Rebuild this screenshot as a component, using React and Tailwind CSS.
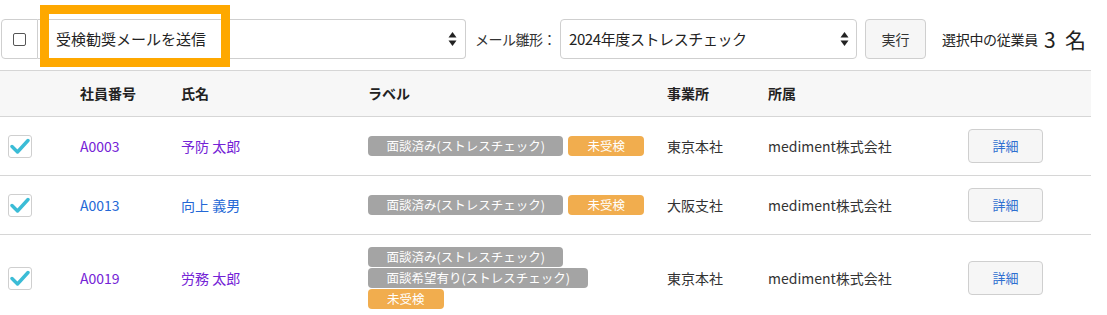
import React from "react";

const font = { fontFamily: '"Noto Sans CJK JP", "Noto Sans", sans-serif' };

function Arrows() {
  return (
    <svg width="9" height="16" viewBox="0 0 9 16" className="shrink-0">
      <path d="M4.5 1 L8.5 6.5 L0.5 6.5 Z" fill="#222" />
      <path d="M4.5 15 L8.5 9.5 L0.5 9.5 Z" fill="#222" />
    </svg>
  );
}

function Check() {
  return (
    <div className="w-[24px] h-[23px] border border-[#cfcfcf] rounded-[3px] bg-white flex items-center justify-center">
      <svg width="20" height="16" viewBox="0 0 20 16">
        <path d="M2 8.5 L7.5 14 L18 2.5" fill="none" stroke="#3bbcd6" strokeWidth="3.4" strokeLinecap="round" strokeLinejoin="round" />
      </svg>
    </div>
  );
}

function Gray({ children }) {
  return (
    <span className="inline-block h-[20px] leading-[20px] px-[18.5px] rounded-[4px] bg-[#a4a4a4] text-white text-[12.5px] whitespace-nowrap">
      {children}
    </span>
  );
}
function Orange() {
  return (
    <span className="inline-block h-[20px] leading-[20px] px-[19px] rounded-[4px] bg-[#f1ad4e] text-white text-[12.5px] whitespace-nowrap">
      未受検
    </span>
  );
}

const grid = "grid grid-cols-[80px_101px_187px_299px_101px_200px_123px] items-center";

function Row({ id, name, color, labels, tall, office }) {
  return (
    <div className={`${grid} border-b border-[#d6d6d6] ${tall ? "py-[12px]" : "h-[59px]"}`}>
      <div className="pl-[8px] flex items-center"><Check /></div>
      <div className={`text-[14px] ${color}`}>{id}</div>
      <div className={`text-[14px] ${color}`}>{name}</div>
      <div>{labels}</div>
      <div className="text-[14px] text-[#333]">{office}</div>
      <div className="text-[14px] text-[#333]">mediment株式会社</div>
      <div>
        <button className="w-[75px] h-[34px] border border-[#cfcfcf] rounded-[4px] bg-[#f6f6f6] text-[13px] text-[#2f6fd0]">
          詳細
        </button>
      </div>
    </div>
  );
}

export default function App() {
  const purple = "text-[#7423d6]";
  const blue = "text-[#2468d6]";
  return (
    <div className="w-[1107px] h-[315px] bg-white overflow-hidden relative" style={font}>
      <div className="flex items-center pt-[19px] pl-[1px]">
        <div className="w-[37px] h-[40px] border border-[#cfcfcf] rounded-l-[4px] flex items-center justify-center bg-white">
          <div className="w-[13px] h-[13px] border border-[#555] rounded-[2px] bg-white" />
        </div>
        <div className="w-[428px] h-[40px] border border-[#cfcfcf] border-l-0 rounded-r-[4px] flex items-center justify-between pl-[18px] pr-[8px] text-[15px] text-[#222] bg-white">
          <span>受検勧奨メールを送信</span>
          <Arrows />
        </div>
        <span className="ml-[9px] text-[14px] text-[#333] tracking-[-0.5px]">メール雛形：</span>
        <div className="ml-[4px] w-[297px] h-[40px] border border-[#cfcfcf] rounded-[4px] flex items-center justify-between pl-[8px] pr-[7px] text-[15px] text-[#222] bg-white tracking-[-0.4px]">
          <span>2024年度ストレスチェック</span>
          <Arrows />
        </div>
        <button className="ml-[8px] w-[61px] h-[40px] border border-[#cfcfcf] rounded-[4px] bg-[#f6f6f6] text-[14px] text-[#333]">
          実行
        </button>
        <span className="ml-[16px] text-[14px] text-[#222] tracking-[-0.3px]">選択中の従業員</span>
        <span className="ml-[6px] text-[21px] text-[#222] leading-none">3&nbsp;&nbsp;名</span>
      </div>

      <div className="absolute left-[40px] top-[5px] w-[190px] h-[62px] border-[9px] border-[#fea800] pointer-events-none" />

      <div className="mt-[11px] w-[1091px]">
        <div className={`${grid} h-[47px] border-y border-[#d6d6d6] bg-[#f7f7f7] text-[14px] font-bold text-[#222]`}>
          <div />
          <div>社員番号</div>
          <div>氏名</div>
          <div>ラベル</div>
          <div>事業所</div>
          <div>所属</div>
          <div />
        </div>
        <Row
          id="A0003"
          name="予防 太郎"
          color={purple}
          office="東京本社"
          labels={
            <div className="flex gap-[5px]">
              <Gray>面談済み(ストレスチェック)</Gray>
              <Orange />
            </div>
          }
        />
        <Row
          id="A0013"
          name="向上 義男"
          color={blue}
          office="大阪支社"
          labels={
            <div className="flex gap-[5px]">
              <Gray>面談済み(ストレスチェック)</Gray>
              <Orange />
            </div>
          }
        />
        <Row
          id="A0019"
          name="労務 太郎"
          color={purple}
          office="東京本社"
          tall
          labels={
            <div className="flex flex-col items-start gap-[1px]">
              <Gray>面談済み(ストレスチェック)</Gray>
              <Gray>面談希望有り(ストレスチェック)</Gray>
              <Orange />
            </div>
          }
        />
      </div>
    </div>
  );
}
